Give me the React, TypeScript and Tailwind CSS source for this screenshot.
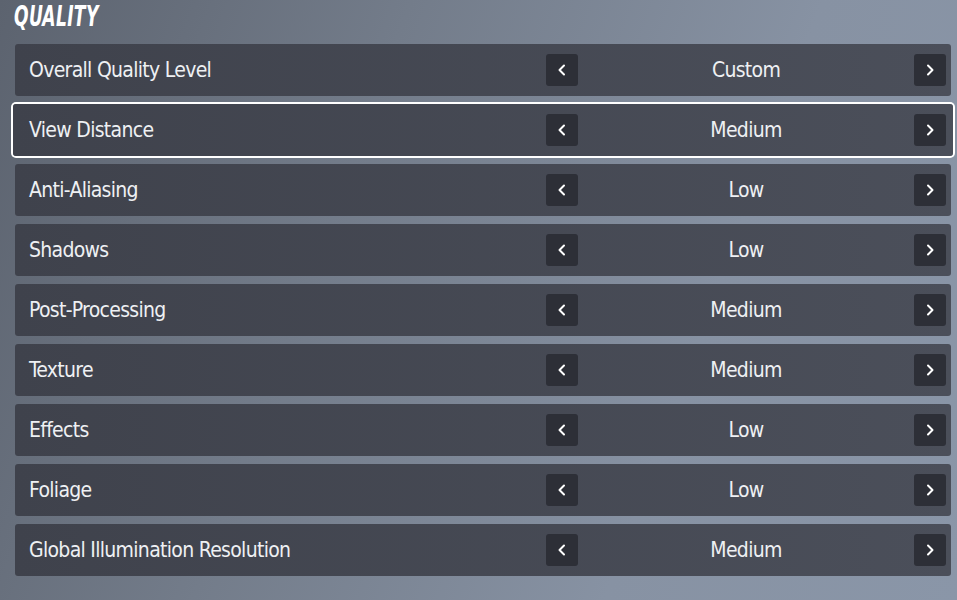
import React from "react";

const rows: [string, string][] = [
  ["Overall Quality Level", "Custom"],
  ["View Distance", "Medium"],
  ["Anti-Aliasing", "Low"],
  ["Shadows", "Low"],
  ["Post-Processing", "Medium"],
  ["Texture", "Medium"],
  ["Effects", "Low"],
  ["Foliage", "Low"],
  ["Global Illumination Resolution", "Medium"],
];

function Chevron({ dir }: { dir: "l" | "r" }) {
  return (
    <svg width="12" height="14" viewBox="0 0 12 14" fill="none">
      {dir === "l" ? (
        <path d="M8 2.5 L3.5 7 L8 11.5" stroke="white" strokeWidth="2" strokeLinecap="round" strokeLinejoin="round" />
      ) : (
        <path d="M4 2.5 L8.5 7 L4 11.5" stroke="white" strokeWidth="2" strokeLinecap="round" strokeLinejoin="round" />
      )}
    </svg>
  );
}

export default function App() {
  return (
    <div
      className="w-[957px] h-[600px] overflow-hidden bg-[linear-gradient(110deg,#5c636f_0%,#737c8a_35%,#8792a3_70%,#8a96a8_100%)] pl-[15px] pr-[6px] pt-[3px]"
      style={{ fontFamily: '"DejaVu Sans Condensed", sans-serif' }}
    >
      <div className="h-[41px] -ml-[1px]">
        <div className="inline-block origin-left scale-x-[0.68] text-[28px] leading-[28px] font-bold italic text-white tracking-[0.5px]">
          QUALITY
        </div>
      </div>
      <div className="flex flex-col gap-[8px]">
        {rows.map(([label, value], i) => (
          <div
            key={label}
            className={
              "h-[52px] rounded-[3px] flex items-center bg-[linear-gradient(90deg,#3f424c,#4b4f5a)] " +
              (i === 1 ? "ring-2 ring-white -mx-[2px] pl-[16px] pr-[7px]" : "pl-[14px] pr-[5px]")
            }
          >
            <div className="flex-1 pt-[2px] text-[21px] tracking-[-0.7px] text-[#eef0f3]">{label}</div>
            <div className="w-[400px] flex items-center">
              <div className="w-[32px] h-[32px] rounded-[3px] bg-[#2d2f37] flex items-center justify-center">
                <Chevron dir="l" />
              </div>
              <div className="flex-1 pt-[2px] text-center text-[21px] tracking-[-0.7px] text-[#eef0f3]">{value}</div>
              <div className="w-[32px] h-[32px] rounded-[3px] bg-[#2d2f37] flex items-center justify-center">
                <Chevron dir="r" />
              </div>
            </div>
          </div>
        ))}
      </div>
    </div>
  );
}
